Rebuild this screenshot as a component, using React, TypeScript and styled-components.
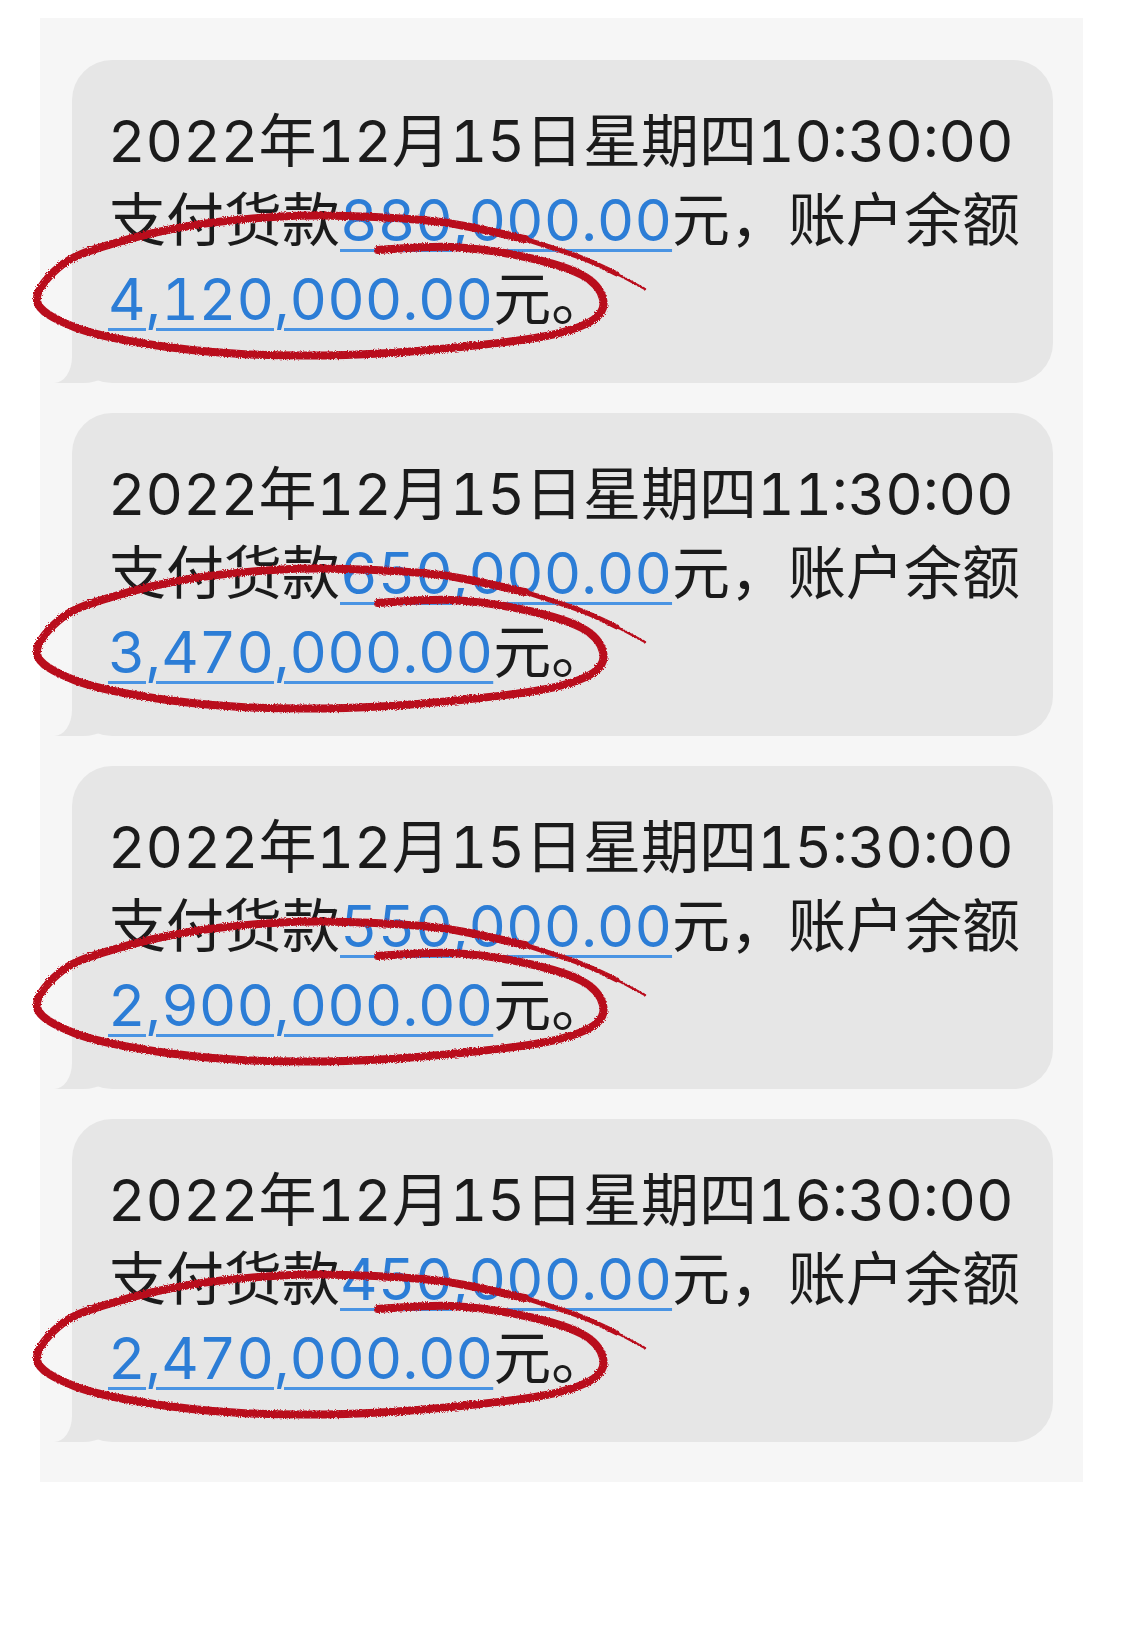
import * as React from 'react'
import styled, { createGlobalStyle } from 'styled-components'

const GlobalStyle = createGlobalStyle`
  html, body {
    margin: 0;
    padding: 0;
    background: #ffffff;
  }
`

const Page = styled.div`
  width: 1125px;
  min-height: 1646px;
  padding: 18px 0 0 40px;
  box-sizing: border-box;
  font-family: Inter, 'Noto Sans CJK SC', sans-serif;
`

const Panel = styled.div`
  width: 1043px;
  box-sizing: border-box;
  background: #f6f6f6;
  padding: 42px 30px 40px 32px;
  display: flex;
  flex-direction: column;
  gap: 30px;
`

const Bubble = styled.div`
  position: relative;
  background: #e6e6e6;
  border-radius: 40px;
  padding: 42px 30px 44px 36px;
  color: #1b1b1b;
  font-size: 58px;
  font-weight: 400;
  line-height: 79px;
  font-variant-numeric: tabular-nums;

  &::before {
    content: '';
    position: absolute;
    left: -19px;
    bottom: 0;
    width: 60px;
    height: 40px;
    background: #e6e6e6;
    border-bottom-right-radius: 30px 20px;
  }
  &::after {
    content: '';
    position: absolute;
    left: -32px;
    bottom: 0;
    width: 32px;
    height: 40px;
    background: #f6f6f6;
    border-bottom-right-radius: 18px 26px;
  }
`

const Line = styled.div`
  position: relative;
  z-index: 1;
  white-space: nowrap;
  height: 79px;
`

const Amount = styled.span`
  color: #2c7dd6;
  text-decoration: underline;
  text-decoration-color: #4a94e3;
  text-decoration-thickness: 2.5px;
  text-underline-offset: 8px;
`

const Mark = styled.svg`
  position: absolute;
  left: 0;
  top: 0;
  width: 100%;
  height: 100%;
  overflow: visible;
  pointer-events: none;
  z-index: 2;
`

type Pt = [number, number]

// catmull-rom through the points, as cubic curves
const smooth = (pts: Pt[]) => {
  let d = `M${pts[0][0]} ${pts[0][1]}`
  for (let i = 0; i < pts.length - 1; i++) {
    const p0 = pts[i - 1] || pts[i]
    const p1 = pts[i]
    const p2 = pts[i + 1]
    const p3 = pts[i + 2] || p2
    const c1x = p1[0] + (p2[0] - p0[0]) / 6
    const c1y = p1[1] + (p2[1] - p0[1]) / 6
    const c2x = p2[0] - (p3[0] - p1[0]) / 6
    const c2y = p2[1] - (p3[1] - p1[1]) / 6
    d += ` C${c1x.toFixed(1)} ${c1y.toFixed(1)} ${c2x.toFixed(1)} ${c2y.toFixed(1)} ${p2[0]} ${p2[1]}`
  }
  return d
}

const loop: Pt[] = [
  [306, 190],
  [379, 187],
  [453, 197],
  [510, 215],
  [531, 239],
  [521, 260],
  [474, 276],
  [379, 288],
  [274, 295],
  [169, 294],
  [75, 284],
  [2, 267],
  [-35, 241],
  [-9, 204],
  [43, 183],
  [117, 166],
  [201, 157],
  [274, 156],
  [369, 162],
  [453, 179]
]

const tail: Pt[] = [
  [453, 179],
  [510, 198],
  [545, 214]
]

const tip: Pt[] = [
  [545, 214],
  [573, 229]
]

const RedCircle = ({ id }: { id: string }) => (
  <Mark>
    <defs>
      <filter id={id} x="-10%" y="-10%" width="120%" height="120%">
        <feTurbulence type="fractalNoise" baseFrequency="0.8" numOctaves={2} seed={3} />
        <feDisplacementMap in="SourceGraphic" scale={3.5} />
      </filter>
    </defs>
    <g filter={`url(#${id})`} fill="none" stroke="#b90b1c" strokeLinecap="round" strokeLinejoin="round">
      <path d={smooth(loop)} strokeWidth={8} />
      <path d={smooth(tail)} strokeWidth={5} />
      <path d={smooth(tip)} strokeWidth={2.5} />
    </g>
  </Mark>
)

interface IMessage {
  time: string
  paid: string
  balance: string
}

const messages: IMessage[] = [
  { time: '10:30:00', paid: '880,000.00', balance: '4,120,000.00' },
  { time: '11:30:00', paid: '650,000.00', balance: '3,470,000.00' },
  { time: '15:30:00', paid: '550,000.00', balance: '2,900,000.00' },
  { time: '16:30:00', paid: '450,000.00', balance: '2,470,000.00' }
]

export default function App() {
  return (
    <Page>
      <GlobalStyle />
      <Panel>
        {messages.map((m, index) => (
          <Bubble key={index}>
            <Line>2022年12月15日星期四{m.time}</Line>
            <Line>
              支付货款<Amount>{m.paid}</Amount>元，账户余额
            </Line>
            <Line>
              <Amount>{m.balance}</Amount>元。
            </Line>
            <RedCircle id={`rough-${index}`} />
          </Bubble>
        ))}
      </Panel>
    </Page>
  )
}
